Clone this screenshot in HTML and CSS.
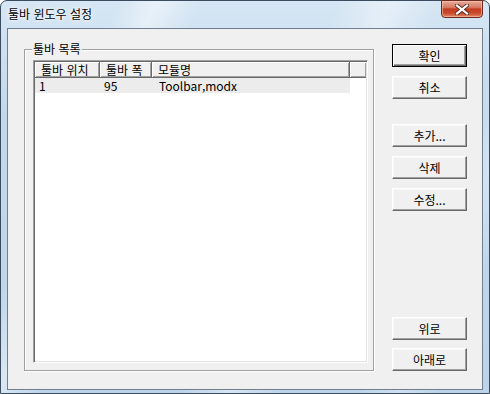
FILE: index.html
```html
<!DOCTYPE html>
<html lang="ko">
<head>
  <meta charset="UTF-8">
  <meta name="viewport" content="width=device-width, initial-scale=1.0">
  <title>툴바 윈도우 설정</title>
  <link rel="stylesheet" href="styles.css">
</head>
<body>
  <div class="dialog">
    <!-- Title bar -->
    <div class="title-bar">
      <span class="title-text">툴바 윈도우 설정</span>
      <button class="close-btn" aria-label="닫기">
        <svg width="14" height="11" viewBox="0 0 14 11">
          <path d="M2 1.5 L12 9.5 M12 1.5 L2 9.5" stroke="#5b2a20" stroke-width="4" stroke-linecap="square"/>
          <path d="M2 1.5 L12 9.5 M12 1.5 L2 9.5" stroke="#ffffff" stroke-width="2.2" stroke-linecap="square"/>
        </svg>
      </button>
    </div>

    <div class="client">
      <!-- Toolbar list -->
      <fieldset class="group">
        <legend>툴바 목록</legend>
        <div class="list-view">
          <div class="list-header">
            <div class="col col-pos">툴바 위치</div>
            <div class="col col-width">툴바 폭</div>
            <div class="col col-module">모듈명</div>
            <div class="col col-fill"></div>
          </div>
          <div class="list-row">
            <div class="cell col-pos">1</div>
            <div class="cell col-width">95</div>
            <div class="cell col-module">Toolbar,modx</div>
          </div>
        </div>
      </fieldset>

      <!-- Buttons -->
      <div class="buttons">
        <button class="btn default">확인</button>
        <button class="btn">취소</button>
        <button class="btn spaced">추가...</button>
        <button class="btn">삭제</button>
        <button class="btn">수정...</button>
        <button class="btn bottom">위로</button>
        <button class="btn">아래로</button>
      </div>
    </div>
  </div>
</body>
</html>
```

FILE: styles.css
```css
/* General Reset */
* {
  margin: 0;
  padding: 0;
  box-sizing: border-box;
}

body {
  width: 490px;
  height: 394px;
  font-family: "Noto Sans CJK KR", "Noto Sans", sans-serif;
  font-size: 12px;
  color: #000;
  background-color: #ffffff;
}

/* Window frame (Vista glass look) */
.dialog {
  width: 490px;
  height: 394px;
  display: flex;
  flex-direction: column;
  padding: 0 6px 3px 6px;
  border: 1px solid #3b4c5e;
  border-radius: 7px 7px 0 0;
  background:
    linear-gradient(112deg, rgba(255,255,255,0) 18%, rgba(255,255,255,0.45) 24%, rgba(255,255,255,0) 31%,
      rgba(255,255,255,0) 52%, rgba(255,255,255,0.4) 60%, rgba(255,255,255,0) 68%,
      rgba(255,255,255,0) 80%, rgba(255,255,255,0.3) 86%, rgba(255,255,255,0) 92%),
    linear-gradient(#d6e6f4, #c2d8ec 30%, #bcd4ea);
}

.title-bar {
  height: 27px;
  display: flex;
  justify-content: space-between;
  align-items: flex-start;
}

.title-text {
  padding: 5px 0 0 1px;
  line-height: 16px;
  text-shadow: 0 0 6px #ffffff, 0 0 3px #ffffff;
}

.close-btn {
  width: 42px;
  height: 18px;
  margin-top: -1px;
  display: flex;
  align-items: center;
  justify-content: center;
  border: 1px solid #6e2b1f;
  border-radius: 0 0 4px 4px;
  background: linear-gradient(#e7ab9a, #d77a62 40%, #c23e22 50%, #c9482b 75%, #e08868);
  box-shadow: inset 0 0 0 1px rgba(255, 210, 190, 0.5);
}

/* Client area */
.client {
  flex: 1;
  display: flex;
  gap: 18px;
  padding: 13px 15px 18px 16px;
  background-color: #f0f0f0;
  border: 1px solid #6f7f90;
}

.group {
  flex: 0 0 350px;
  display: flex;
  flex-direction: column;
  padding: 4px 5px 7px 8px;
  border: 1px solid #a0a0a0;
  box-shadow: 1px 1px 0 #ffffff, inset 1px 1px 0 #ffffff;
}

.group legend {
  margin-left: -1px;
  padding: 0 1px;
  line-height: 14px;
  background-color: #f0f0f0;
}

.list-view {
  flex: 1;
  background-color: #ffffff;
  border: 1px solid;
  border-color: #a0a0a0 #ffffff #ffffff #a0a0a0;
  box-shadow: inset 1px 1px 0 #696969, inset -1px -1px 0 #e3e3e3;
  padding: 1px;
}

.list-header {
  display: flex;
  height: 16px;
}

.list-header .col {
  height: 16px;
  line-height: 15px;
  padding-left: 6px;
  background-color: #f0f0f0;
  border-right: 1px solid #696969;
  border-bottom: 1px solid #696969;
  box-shadow: inset 1px 1px 0 #ffffff, inset -1px -1px 0 #a0a0a0;
  white-space: nowrap;
}

.col-pos { width: 65px; }
.col-width { width: 52px; }
.col-module { width: 198px; }
.list-header .col-fill {
  flex: 1;
  border-right: none;
}

.list-row {
  display: flex;
  height: 15px;
  width: 315px;
  background-color: #ececec;
}

.list-row .cell {
  line-height: 15px;
  padding-left: 4px;
  white-space: nowrap;
}

.list-row .col-module { padding-left: 7px; }

/* Buttons */
.buttons {
  flex: 0 0 75px;
  display: flex;
  flex-direction: column;
  gap: 9px;
  padding-top: 2px;
}

.btn {
  width: 75px;
  height: 23px;
  font-family: inherit;
  font-size: 12px;
  color: #000;
  background-color: #f0f0f0;
  border: 1px solid;
  border-color: #ffffff #696969 #696969 #ffffff;
  box-shadow: inset -1px -1px 0 #a0a0a0, inset 1px 1px 0 #f8f8f8;
}

.btn.default {
  border: 1px solid #000;
  box-shadow: inset 1px 1px 0 #ffffff, inset -1px -1px 0 #696969, inset -2px -2px 0 #a0a0a0;
}

.btn.spaced {
  margin-top: 16px;
}

.btn.bottom {
  margin-top: auto;
  margin-bottom: -1px;
}
```
